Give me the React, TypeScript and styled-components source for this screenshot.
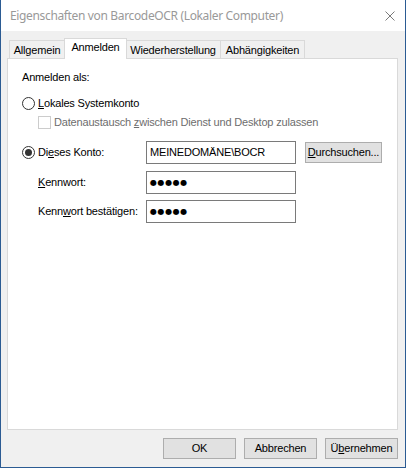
import React from 'react';
import styled, { createGlobalStyle } from 'styled-components';

const Global = createGlobalStyle`
  html, body { margin: 0; padding: 0; }
  body {
    width: 406px; height: 468px; overflow: hidden;
    font-family: "Liberation Sans", Arial, sans-serif;
    font-size: 11px; color: #000;
    letter-spacing: -0.18px;
  }
  * { box-sizing: border-box; }
`;

const Window = styled.div`
  width: 406px;
  height: 468px;
  border: 1px solid #2b5b93;
  border-top: 0;
  display: flex;
  flex-direction: column;
  background: #f0f0f0;
`;

const TitleBar = styled.div`
  height: 31px;
  flex: none;
  background: #fff;
  display: flex;
  align-items: center;
  justify-content: space-between;
  padding: 0 10px 0 9px;
`;

const Title = styled.div`
  font-family: "Noto Sans", "Open Sans", sans-serif;
  font-size: 12px;
  color: #999;
  letter-spacing: -0.35px;
`;

const Body = styled.div`
  flex: 1;
  display: flex;
  flex-direction: column;
  padding: 7px 7px 8px 6px;
`;

const TabRow = styled.div`
  height: 20px;
  flex: none;
  display: flex;
  align-items: flex-end;
  padding-left: 2px;
`;

const Tab = styled.div<{ $active?: boolean; $first?: boolean; $w: number }>`
  width: ${p => p.$w}px;
  height: ${p => (p.$active ? 21 : 18)}px;
  margin: ${p => (p.$active ? '0 -1px -1px -1px' : '0')};
  position: relative;
  z-index: ${p => (p.$active ? 1 : 0)};
  background: ${p => (p.$active ? '#fff' : '#f0f0f0')};
  border-top: 1px solid #d9d9d9;
  border-right: 1px solid #d9d9d9;
  border-left: ${p => (p.$active || p.$first ? '1px solid #d9d9d9' : '0')};
  padding-top: ${p => (p.$active ? 2 : 3)}px;
  text-align: center;
  line-height: 13px;
  white-space: nowrap;
`;

const Panel = styled.div`
  flex: 1;
  background: #fff;
  border: 1px solid #d9d9d9;
  padding: 12px 0 0 14px;
  display: flex;
  flex-direction: column;
`;

const Heading = styled.div`
  line-height: 13px;
`;

const OptionRow = styled.div<{ $indent?: number; $mt: number; $disabled?: boolean }>`
  display: flex;
  align-items: center;
  height: 13px;
  margin-top: ${p => p.$mt}px;
  margin-left: ${p => p.$indent ?? 0}px;
  gap: 3px;
  line-height: 13px;
  color: ${p => (p.$disabled ? '#6d6d6d' : '#000')};
  white-space: nowrap;
`;

const Radio = styled.span<{ $checked?: boolean }>`
  width: 13px;
  height: 13px;
  flex: none;
  border: 1px solid #333;
  border-radius: 50%;
  background: #fff;
  display: flex;
  align-items: center;
  justify-content: center;
  &::after {
    content: '';
    display: ${p => (p.$checked ? 'block' : 'none')};
    width: 7px;
    height: 7px;
    border-radius: 50%;
    background: #333;
  }
`;

const Check = styled.span`
  width: 13px;
  height: 13px;
  flex: none;
  border: 1px solid #cccccc;
  background: #fff;
`;

const Key = styled.span`
  text-decoration: underline;
  text-underline-offset: 1px;
`;

const Fields = styled.div`
  margin-top: 12px;
  display: flex;
  flex-direction: column;
`;

const FieldRow = styled.div<{ $mt: number }>`
  display: flex;
  align-items: center;
  height: 23px;
  margin-top: ${p => p.$mt}px;
`;

const FieldLabel = styled.div<{ $indent?: number }>`
  width: 124px;
  padding-left: ${p => p.$indent ?? 0}px;
  display: flex;
  align-items: center;
  gap: 3px;
  white-space: nowrap;
  line-height: 13px;
`;

const TextBox = styled.div`
  width: 150px;
  height: 23px;
  border: 1px solid #7a7a7a;
  background: #fff;
  padding-left: 3px;
  display: flex;
  align-items: center;
  white-space: nowrap;
  line-height: 13px;
`;

const Dots = styled.span`
  font-family: "DejaVu Sans", sans-serif;
  font-size: 8px;
  letter-spacing: 0.6px;
`;

const Button = styled.div<{ $w: number; $ml?: number }>`
  width: ${p => p.$w}px;
  height: 21px;
  margin-left: ${p => p.$ml ?? 0}px;
  background: #e1e1e1;
  border: 1px solid #adadad;
  display: flex;
  align-items: center;
  justify-content: center;
  line-height: 13px;
  white-space: nowrap;
`;

const ButtonRow = styled.div`
  flex: none;
  margin-top: 8px;
  display: flex;
  justify-content: flex-end;
  gap: 8px;
`;

const CloseIcon = () => (
  <svg width="10" height="10" viewBox="0 0 10 10" style={{ display: 'block' }}>
    <path d="M0.5 0.5 L9.5 9.5 M9.5 0.5 L0.5 9.5" stroke="#7a7a7a" strokeWidth="1" fill="none" />
  </svg>
);

export default function App() {
  return (
    <>
      <Global />
      <Window>
        <TitleBar>
          <Title>Eigenschaften von BarcodeOCR (Lokaler Computer)</Title>
          <CloseIcon />
        </TitleBar>
        <Body>
          <TabRow>
            <Tab $first $w={56}>Allgemein</Tab>
            <Tab $active $w={63}>Anmelden</Tab>
            <Tab $w={95}>Wiederherstellung</Tab>
            <Tab $w={84}>Abhängigkeiten</Tab>
          </TabRow>
          <Panel>
            <Heading>Anmelden als:</Heading>
            <OptionRow $mt={13}>
              <Radio />
              <span><Key>L</Key>okales Systemkonto</span>
            </OptionRow>
            <OptionRow $mt={6} $indent={16} $disabled>
              <Check />
              <span>Datenaustausch <Key>z</Key>wischen Dienst und Desktop zulassen</span>
            </OptionRow>
            <Fields>
              <FieldRow $mt={0}>
                <FieldLabel>
                  <Radio $checked />
                  <span>Di<Key>e</Key>ses Konto:</span>
                </FieldLabel>
                <TextBox>MEINEDOMÄNE\BOCR</TextBox>
                <Button $w={77} $ml={9}><span><Key>D</Key>urchsuchen...</span></Button>
              </FieldRow>
              <FieldRow $mt={7}>
                <FieldLabel $indent={16}>
                  <span><Key>K</Key>ennwort:</span>
                </FieldLabel>
                <TextBox><Dots>●●●●●</Dots></TextBox>
              </FieldRow>
              <FieldRow $mt={6}>
                <FieldLabel $indent={16}>
                  <span>Kenn<Key>w</Key>ort bestätigen:</span>
                </FieldLabel>
                <TextBox><Dots>●●●●●</Dots></TextBox>
              </FieldRow>
            </Fields>
          </Panel>
          <ButtonRow>
            <Button $w={73}>OK</Button>
            <Button $w={73}>Abbrechen</Button>
            <Button $w={73}><span>Ü<Key>b</Key>ernehmen</span></Button>
          </ButtonRow>
        </Body>
      </Window>
    </>
  );
}
